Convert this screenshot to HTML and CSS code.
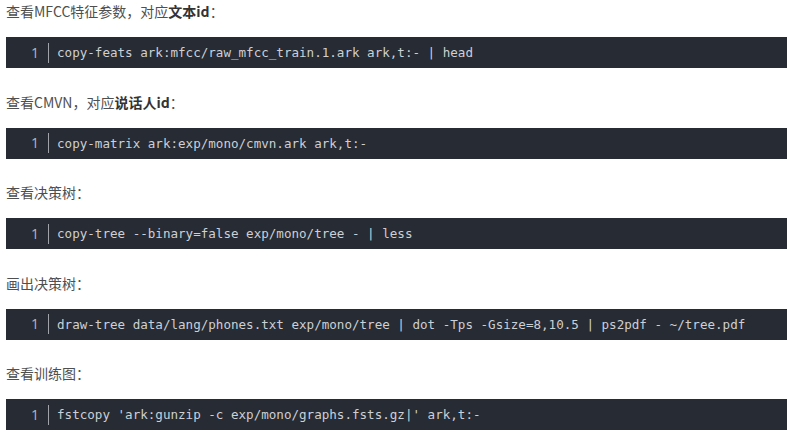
FILE: index.html
```html
<!DOCTYPE html>
<html lang="zh-CN">
<head>
<meta charset="utf-8">
<title>Kaldi</title>
<link rel="stylesheet" href="styles.css">
</head>
<body>
<div class="article">
  <p class="para">查看MFCC特征参数，对应<strong>文本id</strong>：</p>
  <pre class="code"><span class="ln">1</span><code class="src">copy-feats ark:mfcc/raw_mfcc_train.1.ark ark,t:- | head</code></pre>

  <p class="para">查看CMVN，对应<strong>说话人id</strong>：</p>
  <pre class="code"><span class="ln">1</span><code class="src">copy-matrix ark:exp/mono/cmvn.ark ark,t:-</code></pre>

  <p class="para">查看决策树：</p>
  <pre class="code"><span class="ln">1</span><code class="src">copy-tree --binary=false exp/mono/tree - | less</code></pre>

  <p class="para">画出决策树：</p>
  <pre class="code"><span class="ln">1</span><code class="src">draw-tree data/lang/phones.txt exp/mono/tree | dot -Tps -Gsize=8,10.5 | ps2pdf - ~/tree.pdf</code></pre>

  <p class="para">查看训练图：</p>
  <pre class="code"><span class="ln">1</span><code class="src">fstcopy 'ark:gunzip -c exp/mono/graphs.fsts.gz|' ark,t:-</code></pre>
</div>
</body>
</html>
```

FILE: styles.css
```css
html, body {
  margin: 0;
  padding: 0;
  background: #ffffff;
}

.article {
  padding: 0 0 0 6px;
  display: flex;
  flex-direction: column;
}

.para {
  margin: 0 0 15px 0;
  font-family: "Noto Sans CJK SC", "Noto Sans", sans-serif;
  font-size: 14px;
  line-height: 22px;
  color: #4f4f4f;
  white-space: nowrap;
}

.para strong {
  font-weight: 700;
  color: #333333;
}

.code {
  margin: 0 0 22.5px 0;
  padding: 5px 0;
  background: #272b33;
  display: flex;
  align-items: center;
  font-family: "DejaVu Sans Mono", "Liberation Mono", monospace;
  font-size: 12.57px;
  line-height: 21px;
  white-space: pre;
  overflow: hidden;
}

.ln {
  width: 33px;
  padding-right: 9px;
  text-align: right;
  font-family: "Open Sans", "DejaVu Sans", sans-serif;
  font-size: 14px;
  color: #b4b8be;
  border-right: 1px solid #a0a4aa;
  line-height: 20px;
  flex: none;
}

.src {
  padding-left: 8px;
  color: #cdd0d5;
  font-family: inherit;
  font-size: inherit;
}
```
